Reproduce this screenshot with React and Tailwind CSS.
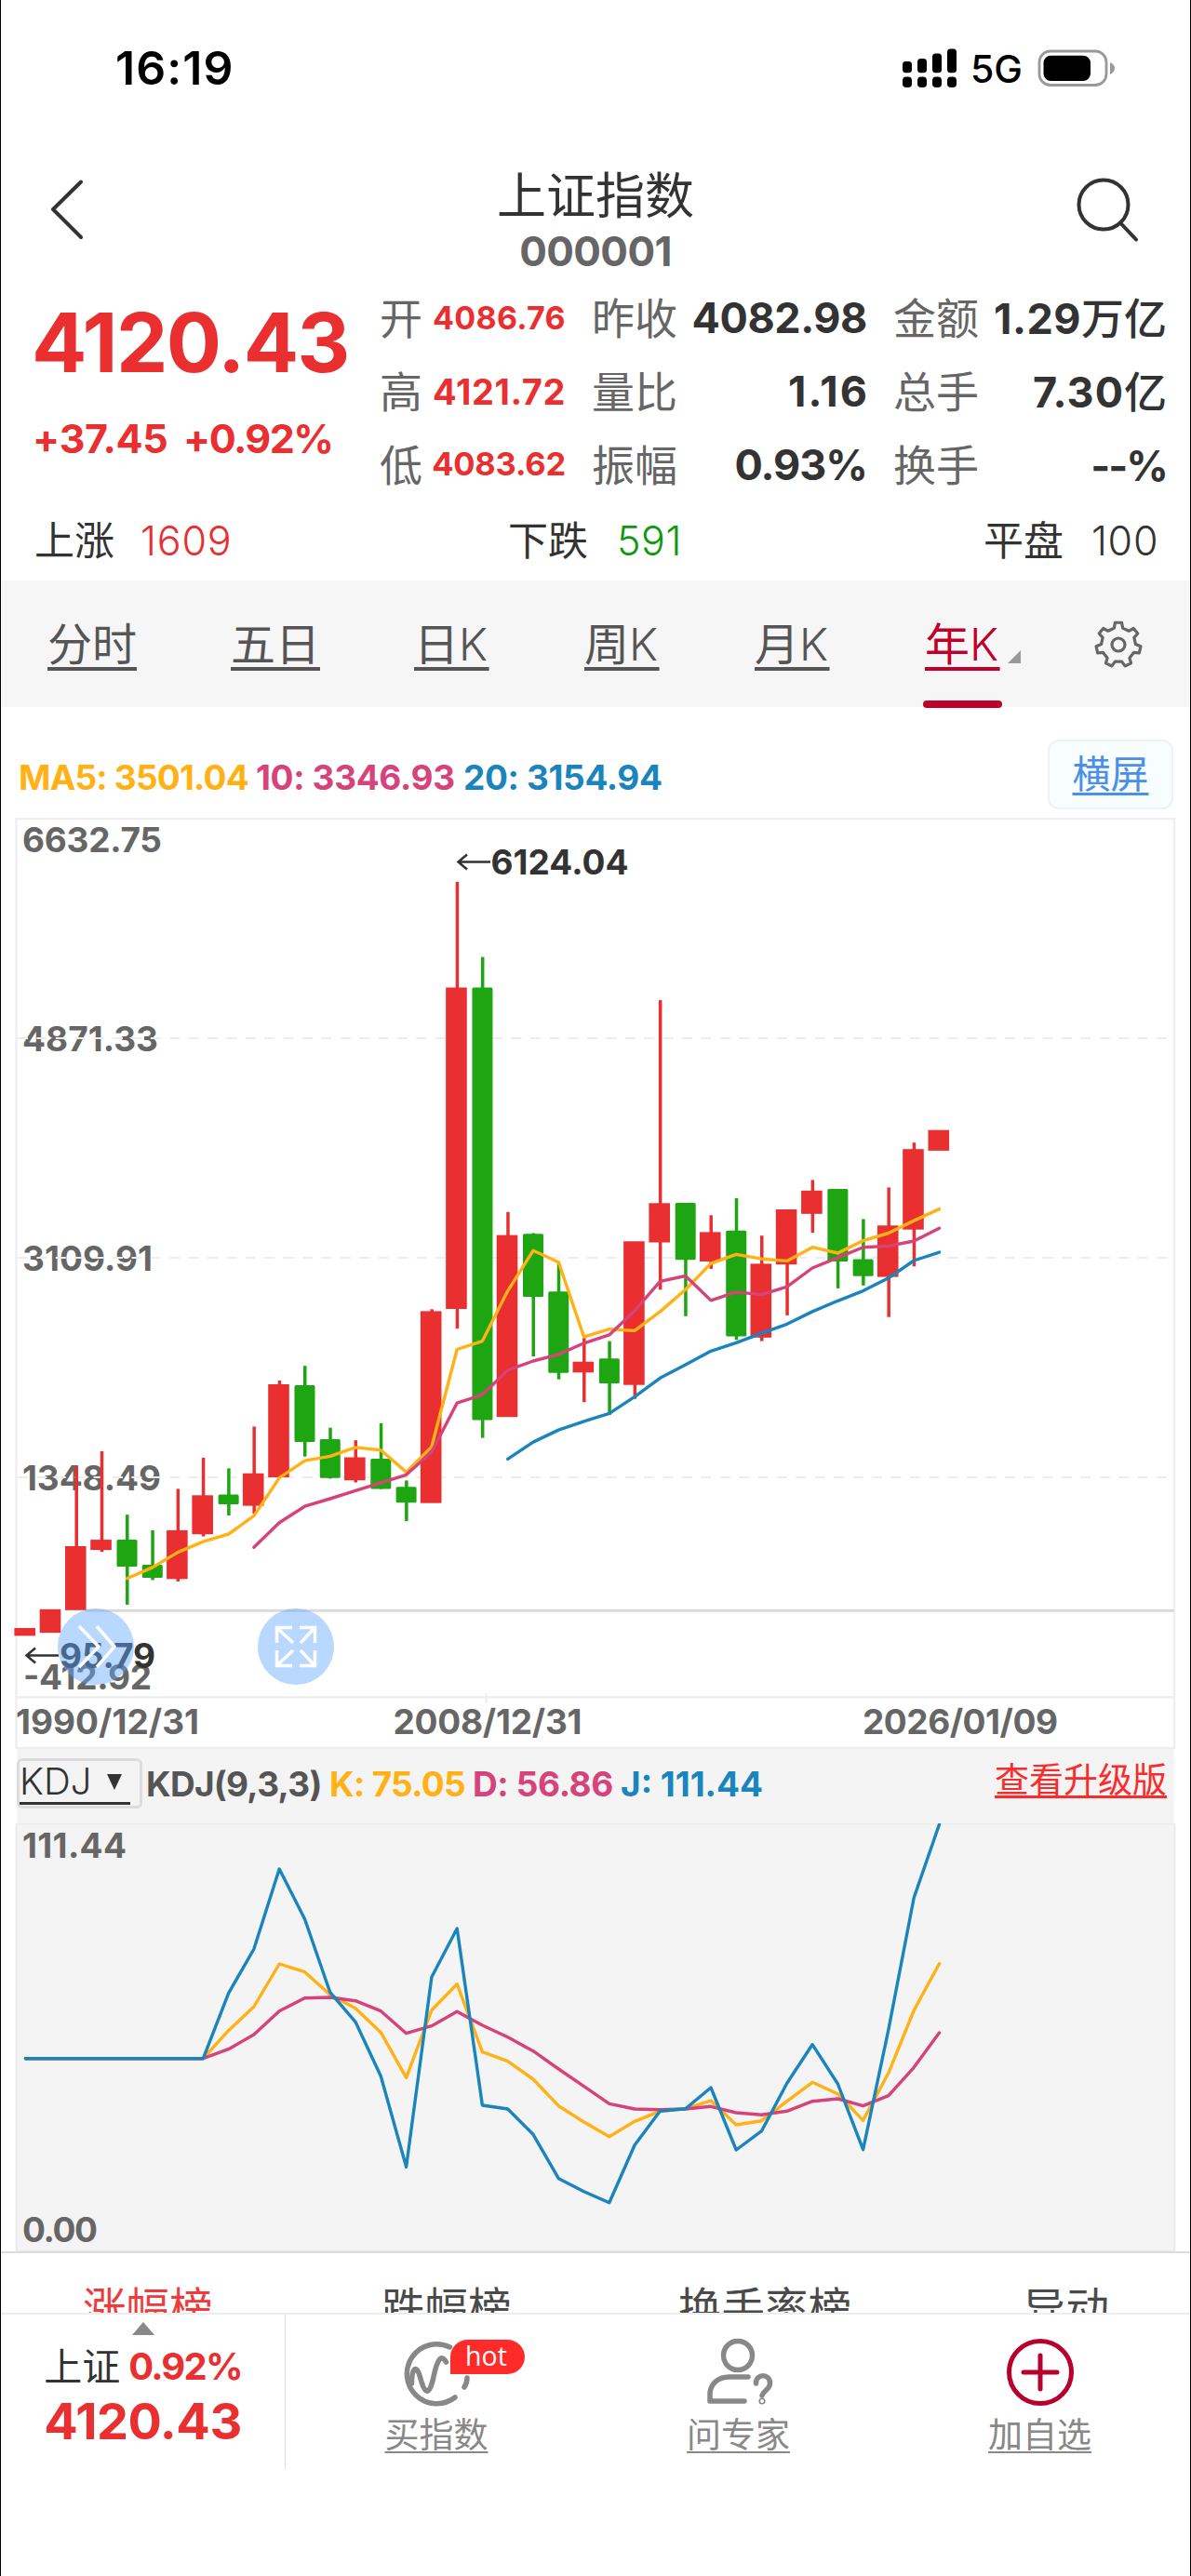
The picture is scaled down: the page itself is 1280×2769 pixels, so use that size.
import React from "react";

const RED = "#e92f30";
const GREEN = "#1ea512";
const X0 = 27.4;
const STEP = 27.28;
const px = (i) => X0 + STEP * i;

// [rising, high, bodyTop, bodyBottom, low]
const CANDLES = [
  [1, 1750, 1750, 1758.4, 1758],
  [1, 1730, 1729.8, 1755.1, 1755],
  [1, 1576.3, 1662, 1730.8, 1730],
  [1, 1560, 1655.1, 1666.1, 1668.2],
  [0, 1628.2, 1655.1, 1683.9, 1724.9],
  [0, 1644.9, 1682, 1696, 1698.4],
  [1, 1600.4, 1644.9, 1697.3, 1700],
  [1, 1566.9, 1607.3, 1649.2, 1651.6],
  [0, 1578.4, 1606.5, 1617, 1629],
  [1, 1533.5, 1583.7, 1618.6, 1627],
  [1, 1484, 1488, 1588, 1588],
  [0, 1468.2, 1489, 1550, 1565.7],
  [0, 1534.7, 1546.9, 1588.8, 1589.4],
  [1, 1548.2, 1566.5, 1591.2, 1593.5],
  [0, 1529.8, 1568, 1600.6, 1600.6],
  [0, 1591.4, 1598.2, 1615.3, 1635.1],
  [1, 1407.3, 1409.4, 1615.7, 1615],
  [1, 947.9, 1061.5, 1407, 1428.2],
  [0, 1028.7, 1061.5, 1526.5, 1545.6],
  [1, 1302.8, 1327.6, 1523.2, 1523],
  [0, 1325.5, 1326.3, 1394, 1458.1],
  [0, 1357.7, 1388.3, 1475.7, 1482.7],
  [1, 1437.1, 1463.7, 1475.3, 1507.2],
  [0, 1441.6, 1460.2, 1487, 1521],
  [1, 1335, 1334.3, 1488.7, 1503.7],
  [1, 1075.1, 1293.3, 1335.5, 1386.3],
  [0, 1294, 1292.9, 1354.3, 1414.8],
  [1, 1306.3, 1324.4, 1356, 1363.9],
  [0, 1288, 1322.7, 1436.5, 1440.3],
  [1, 1328.2, 1358.4, 1437.8, 1441.6],
  [1, 1301, 1300, 1359.2, 1413.9],
  [1, 1268.4, 1279.8, 1304.8, 1325.1],
  [0, 1279, 1278.1, 1356, 1384.9],
  [0, 1310.4, 1353.5, 1371.7, 1381.8],
  [1, 1276.4, 1317.3, 1372.6, 1415.7],
  [1, 1228.2, 1235.2, 1321.7, 1361.3],
  [1, 1216, 1214.7, 1236.9, 1236],
];

const MA5 = [1696.7, 1684.9, 1668.6, 1657.1, 1649, 1629.4, 1588.6, 1570.2, 1565.3, 1555.9, 1558.8, 1582.4, 1555.1, 1450.5, 1441.6, 1387.6, 1344.3, 1356.8, 1437.1, 1428.7, 1430.4, 1409.9, 1386.3, 1358.1, 1348.3, 1353.2, 1355.4, 1340.7, 1347, 1333.6, 1325.5, 1312.1, 1299.6];
const MA10 = [1663.3, 1636.7, 1619.2, 1611, 1602.4, 1593.9, 1585.3, 1560.8, 1508.1, 1499.2, 1472.9, 1463, 1455.9, 1443.8, 1434.9, 1409, 1377.3, 1371.5, 1397.9, 1388.9, 1391.6, 1383.1, 1363, 1351.9, 1340.7, 1339.4, 1334, 1320.2];
const MA20 = [1568.4, 1550.1, 1537.1, 1527.8, 1519.3, 1501.4, 1481.3, 1467.1, 1452.3, 1443.4, 1433.1, 1423.3, 1409.9, 1398.3, 1387.6, 1373.8, 1355, 1346.1];

const FLAT = [2212.7, 2212.7, 2212.7, 2212.7, 2212.7, 2212.7, 2212.7, 2212.7];
const J = [...FLAT, 2142.7, 2095, 2009, 2062.7, 2141.7, 2173.3, 2231.7, 2329.3, 2125.3, 2073, 2263, 2267, 2294.3, 2341.7, 2355.7, 2367.7, 2305.7, 2269.3, 2266.7, 2244, 2311, 2290.7, 2239.3, 2197.7, 2240, 2310.7, 2181.7, 2040, 1961];
const K = [...FLAT, 2182.7, 2157, 2111, 2119.7, 2144.3, 2158.7, 2184.7, 2233.3, 2160.7, 2132.7, 2205.7, 2215.7, 2235, 2263.7, 2281, 2296.7, 2280.3, 2269.3, 2266.7, 2258, 2284, 2279.7, 2258.7, 2238.3, 2250.7, 2279.3, 2228.3, 2161, 2110.7];
const D = [...FLAT, 2202.7, 2187, 2161.7, 2147.7, 2147, 2150.7, 2161.7, 2185.7, 2177.7, 2162.3, 2177, 2189.7, 2204.7, 2224, 2242.7, 2261.3, 2267, 2267.7, 2267, 2264.3, 2271, 2273.3, 2269.3, 2258.7, 2256, 2263.7, 2252.7, 2222.3, 2185];

function Line({ data, from = 0, color }) {
  const points = data.map((y, i) => `${px(i + from).toFixed(1)},${y}`).join(" ");
  return <polyline points={points} fill="none" stroke={color} strokeWidth="3.400" strokeLinejoin="round" strokeLinecap="round" />;
}

function Label({ x, y, w, children, fill = "#666" }) {
  return (
    <text x={x} y={y} textLength={w} fontSize="37" fontWeight="650" fill={fill}>
      {children}
    </text>
  );
}

function StatusBar() {
  return (
    <header className="flex h-[145px] items-center pl-[123px] pr-[80px] text-black">
      <span className="text-[50px] font-semibold leading-none tracking-[1.1px]">16:19</span>
      <svg className="ml-auto" width="60" height="44" viewBox="969 50 60 44">
        {[65, 62, 56.5, 51.5].map((top, i) => (
          <g key={top}>
            <rect x={970 + i * 16} y={top} width="10" height={77.3 - top} rx="3.5" />
            <rect x={970 + i * 16} y="81.5" width="10" height="11.5" rx="4" />
          </g>
        ))}
      </svg>
      <span className="ml-[14px] mt-[3px] w-[56px] text-[41px] font-medium leading-none">5G</span>
      <svg className="ml-[16px]" width="84" height="42" viewBox="1116 51 84 42">
        <rect x="1118" y="54" width="72" height="36.5" rx="12" fill="#fff" stroke="#999" strokeWidth="2.8" />
        <rect x="1122.5" y="58.7" width="50.5" height="27.3" rx="8" />
        <path d="M1194 66c3 1.500 5 3.500 5 6.500s-2 5-5 6.500z" fill="#999" />
      </svg>
    </header>
  );
}

function TitleBar() {
  return (
    <div className="flex h-[155px] justify-between px-[47px]">
      <svg width="78" height="155" viewBox="48 145 78 155" fill="none" stroke="#333" strokeWidth="4" strokeLinecap="round" strokeLinejoin="round">
        <path d="M87 195.500L57 225l30 30" />
      </svg>
      <div className="flex flex-col items-center pt-[36px]">
        <h1 className="text-[53px] leading-[60px] text-[#333]">上证指数</h1>
        <span className="text-[44px] font-bold leading-[59px] tracking-[-0.6px] text-[#666]">000001</span>
      </div>
      <svg width="78" height="155" viewBox="1154 145 78 155" fill="none" stroke="#333" strokeWidth="4" strokeLinecap="round">
        <circle cx="1186" cy="220" r="26.500" />
        <path d="M1204 239.500l17 18" />
      </svg>
    </div>
  );
}

const STATS = [
  ["开", "4086.76", "text-[34px] tracking-[0.3px]", "昨收", "4082.98", "tracking-[-0.4px]", "金额", "1.29", "万亿", "tracking-[0.5px]"],
  ["高", "4121.72", "text-[38px] tracking-[0.6px]", "量比", "1.16", "tracking-[2px] -mr-[2px]", "总手", "7.30", "亿", "tracking-[1px]"],
  ["低", "4083.62", "text-[34.5px] tracking-[-0.2px]", "振幅", "0.93%", "tracking-[-1px]", "换手", "--%", "", "tracking-[-2px]"],
];

function Quote() {
  return (
    <section className="flex h-[240px] pl-[33px] pt-[2px]">
      <div className="w-[374px] whitespace-nowrap text-[#e92f30]">
        <div className="mt-[20px] text-[88px] font-bold leading-[92px] tracking-[-1.6px]">4120.43</div>
        <div className="ml-px mt-[32px] flex text-[43px] font-bold leading-[50px]">
          <span className="w-[162px] tracking-[-0.3px]">+37.45</span>
          <span className="tracking-[-1.5px]">+0.92%</span>
        </div>
      </div>
      <div>
        {STATS.map(([a, av, aStyle, b, bv, bStyle, c, cv, unit, cStyle]) => (
          <div key={a} className="flex h-[79px] items-center whitespace-nowrap text-[46px] leading-none text-[#666]">
            <span className="w-[46px]">{a}</span>
            <span className={`${aStyle} w-[154px] text-right font-bold text-[#e92f30]`}>{av}</span>
            <span className="ml-[28px] w-[92px]">{b}</span>
            <span className="w-[204px] text-right text-[45px] font-bold text-[#333]"><span className={bStyle}>{bv}</span></span>
            <span className="ml-[28px] w-[92px]">{c}</span>
            <span className="w-[202px] text-right text-[45px] font-bold text-[#333]">
              <span className={cStyle}>{cv}</span>
              <span className="text-[46px] font-medium">{unit}</span>
            </span>
          </div>
        ))}
      </div>
    </section>
  );
}

function Breadth() {
  return (
    <section className="flex h-[84px] items-center pb-[2px] pl-[36px] text-[43px] leading-none text-[#333]">
      <div className="flex w-[509px] gap-[28px]">上涨<span className="font-light tracking-[0.8px] text-[#e92f30]">1609</span></div>
      <div className="flex w-[511px] gap-[31px]">下跌<span className="font-light tracking-[0.6px] text-[#0c9a0c]">591</span></div>
      <div className="flex gap-[30px]">平盘<span className="font-light tracking-[0.7px]">100</span></div>
    </section>
  );
}

function GearIcon() {
  const teeth = 7;
  const pts = [];
  for (let i = 0; i < teeth; i++) {
    const a = (i * 2 * Math.PI) / teeth - Math.PI / 2;
    [[-0.25, 18.5], [-0.15, 24], [0.15, 24], [0.25, 18.5]].forEach(([o, r]) => {
      pts.push(`${(27 + r * Math.cos(a + o)).toFixed(2)},${(27 + r * Math.sin(a + o)).toFixed(2)}`);
    });
  }
  return (
    <svg width="54" height="54" viewBox="0 0 54 54" fill="none" stroke="#666" strokeWidth="3.2" strokeLinejoin="round">
      <polygon points={pts.join(" ")} />
      <circle cx="27" cy="27" r="7" />
    </svg>
  );
}

function PeriodTabs() {
  const link = "underline decoration-[3.5px] underline-offset-[7px] [text-decoration-skip-ink:none]";
  const latin = "font-[350] tracking-[1.5px]";
  return (
    <nav className="relative flex h-[136px] items-center bg-[#f6f6f6] pl-[50px] pt-[2px] text-[48px] leading-none text-[#555]">
      <span className="w-[197px]"><span className={link}>分时</span></span>
      <span className="w-[197px]"><span className={link}>五日</span></span>
      <span className="w-[183px]"><span className={link}>日<span className={latin}>K</span></span></span>
      <span className="w-[183px]"><span className={link}>周<span className={latin}>K</span></span></span>
      <span className="w-[183px]"><span className={link}>月<span className={latin}>K</span></span></span>
      <span className="w-[82px] text-[#bf002b]"><span className={link}>年<span className={latin}>K</span></span></span>
      <svg className="ml-[7px] mt-[26px]" width="15" height="14" viewBox="0 0 15 14"><path d="M14 0v14H0z" fill="#999" /></svg>
      <span className="ml-[77px]"><GearIcon /></span>
      <span className="absolute left-[991px] top-[129px] h-2 w-[85px] rounded bg-[#bf002b]" />
    </nav>
  );
}

function MaLegend() {
  return (
    <div className="flex h-[119px] items-center whitespace-nowrap pl-[19px] pr-[18px] text-[37px] font-bold leading-none">
      <span className="mt-[32px] w-[255px] tracking-[-0.8px] text-[#ffb115]">MA5: 3501.04</span>
      <span className="mt-[32px] w-[223px] tracking-[-0.35px] text-[#d6437a]">10: 3346.93</span>
      <span className="mt-[32px] tracking-[-0.35px] text-[#1a85bd]">20: 3154.94</span>
      <button className="ml-auto mt-[26px] h-[75px] w-[135px] rounded-[12px] border-2 border-[#eef2f4] bg-[#f8fdff] text-[41px] font-normal leading-none text-[#4a90e8] underline decoration-[3px] underline-offset-[5px] [text-decoration-skip-ink:none]">
        横屏
      </button>
    </div>
  );
}

function MainChart() {
  return (
    <div className="relative h-[1001px]">
      <svg width="1278" height="1001" viewBox="1 879 1278 1001" className="block">
        <g fill="none" stroke="#efefef" strokeWidth="2.500">
          <rect x="17.500" y="880" width="1244.500" height="999" />
          <path d="M17 1824.500h1245M522.500 1820v11" />
        </g>
        <Label x="24" y="916" w="150">6632.75</Label>
        <Label x="24" y="1130" w="146">4871.33</Label>
        <Label x="24" y="1366" w="140">3109.91</Label>
        <Label x="24" y="1601.500" w="149">1348.49</Label>
        <g stroke="#ededed" strokeWidth="2" strokeDasharray="11 9.400">
          <path d="M19 1116H1262M19 1352H1262M19 1588H1262" />
        </g>
        <path d="M92 1731.300H1262" stroke="#dadada" strokeWidth="3" />
        {CANDLES.map(([up, high, top, bottom, low], i) => {
          const color = up ? RED : GREEN;
          return (
            <g key={i} fill={color}>
              <rect x={px(i) - 1.500} y={high} width="3.500" height={low - high} />
              <rect x={px(i) - (up ? 12 : 11)} y={top} width={up ? 22.600 : 22} height={bottom - top} rx={up ? 0 : 1.500} />
            </g>
          );
        })}
        <Line data={MA5} from={4} color="#ffb115" />
        <Line data={MA10} from={9} color="#d6437a" />
        <Line data={MA20} from={19} color="#1a85bd" />
        <g fill="none" stroke="#333" strokeWidth="2.500">
          <path d="M527 926.500H493M502 918.500l-9.500 8 9.500 8" />
          <path d="M63 1779.500H29M38 1771.500l-9.500 8 9.500 8" />
        </g>
        <Label x="527.500" y="940" w="148" fill="#333">6124.04</Label>
        <Label x="25" y="1816" w="138">-412.92</Label>
        <Label x="64" y="1792.500" w="103" fill="#333">95.79</Label>
        <Label x="17" y="1864" w="197">1990/12/31</Label>
        <Label x="422.500" y="1864" w="203">2008/12/31</Label>
        <Label x="927" y="1864" w="210">2026/01/09</Label>
      </svg>
      <button className="absolute left-[61px] top-[850px] flex size-[82px] items-center justify-center rounded-full bg-[rgba(98,168,254,0.45)]">
        <svg width="44" height="46" viewBox="0 0 44 46" fill="none" stroke="#fff" strokeWidth="3.500">
          <path d="M4 1l21 22L4 45M23 1l19 22-19 22" />
        </svg>
      </button>
      <button className="absolute left-[276px] top-[850px] flex size-[82px] items-center justify-center rounded-full bg-[rgba(98,168,254,0.45)]">
        <svg width="46" height="46" viewBox="0 0 46 46" fill="none" stroke="#fff" strokeWidth="3.500">
          <path d="M19 2.500H2.500V19M27 2.500h16.500V19M19 43.500H2.500V27M27 43.500h16.500V27M3 3l17 16M43 3L28 19M3 43l17-16M43 43L28 27" />
        </svg>
      </button>
    </div>
  );
}

function KdjPanel() {
  return (
    <section>
      <div className="mx-[17px] flex h-[80px] items-center whitespace-nowrap bg-[#f4f4f4] pb-[6px] text-[37px] font-bold leading-none">
        <button className="flex h-[54px] w-[135px] items-start rounded-md border-[3px] border-[#dcdcdc] font-light text-[#333]">
          <span className="flex h-[47px] w-[119px] items-center border-b-[3px] border-[#333]">
            <span className="w-[94px] text-left text-[40px] font-light">KDJ</span>
            <svg width="16" height="17" viewBox="0 0 16 17"><path d="M0 0h16L8 17z" fill="#333" /></svg>
          </span>
        </button>
        <span className="ml-[4px] w-[197px] tracking-[-0.7px] text-[#555]">KDJ(9,3,3)</span>
        <span className="w-[154px] tracking-[-0.7px] text-[#ffb115]">K: 75.05</span>
        <span className="w-[159px] tracking-[-0.35px] text-[#d6437a]">D: 56.86</span>
        <span className="text-[#1a85bd]">J: 111.44</span>
        <span className="-mt-[7px] ml-auto mr-[8px] font-normal text-[#fb2b2b] underline decoration-[3px] underline-offset-[3px] [text-decoration-skip-ink:none]">
          查看升级版
        </span>
      </div>
      <svg width="1278" height="460" viewBox="1 1960 1278 460" className="block">
        <rect x="17.500" y="1960.500" width="1245" height="459" fill="#f4f4f4" stroke="#ececec" strokeWidth="2" />
        <Label x="24" y="1997" w="112">111.44</Label>
        <Label x="24" y="2410" w="81">0.00</Label>
        <Line data={K} color="#ffb115" />
        <Line data={D} color="#d6437a" />
        <Line data={J} color="#1a85bd" />
      </svg>
    </section>
  );
}

function RankTabs() {
  return (
    <nav className="flex h-[66px] items-start overflow-hidden whitespace-nowrap border-t-2 border-[#dcdcdc] pl-[88px] pt-[36px] text-[46.500px] leading-none text-[#4a4a4a]">
      <span className="w-[321px] text-[#ee3b3b]">涨幅榜</span>
      <span className="w-[319px]">跌幅榜</span>
      <span className="w-[370px]">换手率榜</span>
      <span>异动</span>
    </nav>
  );
}

function BottomBar() {
  const label = "mt-[9px] text-[37px] leading-[37px] underline decoration-[2px] underline-offset-[4px] [text-decoration-skip-ink:none]";
  return (
    <footer className="flex h-[283px] border-t-2 border-[#ededed] text-[#888]">
      <div className="flex h-[166px] w-[306px] flex-col items-center border-r border-[#ddd] pt-[8px]">
        <svg width="24" height="14" viewBox="0 0 24 14"><path d="M12 0l12 14H0z" fill="#888" /></svg>
        <div className="mt-[12px] flex gap-[9px] text-[41px] leading-[44px] text-[#333]">
          上证<span className="text-[40px] font-bold tracking-[-1.8px] text-[#e92f30]">0.92%</span>
        </div>
        <div className="mt-[10px] text-[54px] font-bold leading-[54px] tracking-[-0.5px] text-[#e92f30]">4120.43</div>
      </div>
      <div className="flex w-[324px] flex-col items-center pt-[24px]">
        <div className="relative h-[78px] w-[74px]">
          <svg width="74" height="78" viewBox="433 2512 74 78" fill="none" stroke="#888" strokeWidth="5.500" strokeLinecap="round">
            <path d="M484.500 2523A32 32 0 1 0 490 2577" />
            <path d="M443.500 2562c0-17 5-21 9-7 4 16 9 23 14 2 5-24 9-26 14-18M503 2556c0 4-1 7-3 10" />
          </svg>
          <span className="absolute left-[52px] top-[3px] flex h-[37px] w-[80px] items-center justify-center rounded-full rounded-bl-none bg-[#ff2a2a] pb-[3px] pr-[3px] font-['Open_Sans'] text-[28.5px] leading-none text-white">hot</span>
        </div>
        <span className={label}>买指数</span>
      </div>
      <div className="flex w-[325px] flex-col items-center pt-[24px]">
        <svg width="78" height="78" viewBox="754 2512 78 78" fill="none" stroke="#888" strokeWidth="5.500" strokeLinecap="round" strokeLinejoin="round">
          <circle cx="792" cy="2532" r="15.500" />
          <path d="M803 2555h-20c-13 0-21 8-21 19v7h37M811.500 2562c0-11 15-11 15 0 0 6-7 8-8.500 13" />
          <circle cx="818" cy="2581" r="0.800" />
        </svg>
        <span className={label}>问专家</span>
      </div>
      <div className="flex w-[323px] flex-col items-center pt-[24px]">
        <svg width="78" height="78" viewBox="1078.500 2512 78 78" fill="none" stroke="#b8002e" strokeWidth="5" strokeLinecap="round">
          <circle cx="1117.500" cy="2550" r="33.500" />
          <path d="M1117.500 2532v36M1099.500 2550h36" />
        </svg>
        <span className={label}>加自选</span>
      </div>
    </footer>
  );
}

export default function App() {
  return (
    <main className="h-[2769px] w-[1280px] overflow-hidden border-x border-black bg-white font-['Inter','Noto_Sans_CJK_SC',sans-serif]">
      <StatusBar />
      <TitleBar />
      <Quote />
      <Breadth />
      <PeriodTabs />
      <MaLegend />
      <MainChart />
      <KdjPanel />
      <RankTabs />
      <BottomBar />
    </main>
  );
}
